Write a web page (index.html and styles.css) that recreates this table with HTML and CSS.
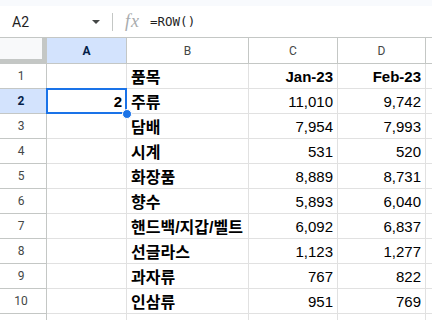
FILE: index.html
```html
<!DOCTYPE html>
<html lang="ko">
<head>
    <meta charset="UTF-8">
    <meta name="viewport" content="width=device-width, initial-scale=1.0">
    <title>Sheet</title>
    <link rel="stylesheet" href="styles.css">
</head>
<body>
    <div class="top-strip"></div>
    <div class="formula-bar">
        <div class="name-box">
            <span class="name">A2</span>
            <span class="caret"></span>
        </div>
        <span class="sep"></span>
        <span class="fx">fx</span>
        <span class="formula">=ROW()</span>
    </div>

    <div class="sheet">
        <div class="corner"></div>
        <div class="col-head active">A</div>
        <div class="col-head">B</div>
        <div class="col-head">C</div>
        <div class="col-head">D</div>
        <div class="col-head"></div>

        <div class="row-head">1</div>
        <div class="cell"></div>
        <div class="cell bold ko">품목</div>
        <div class="cell num bold">Jan-23</div>
        <div class="cell num bold">Feb-23</div>
        <div class="cell"></div>

        <div class="row-head active">2</div>
        <div class="cell num bold selected">2<span class="handle"></span></div>
        <div class="cell bold ko">주류</div>
        <div class="cell num">11,010</div>
        <div class="cell num">9,742</div>
        <div class="cell"></div>

        <div class="row-head">3</div>
        <div class="cell"></div>
        <div class="cell bold ko">담배</div>
        <div class="cell num">7,954</div>
        <div class="cell num">7,993</div>
        <div class="cell"></div>

        <div class="row-head">4</div>
        <div class="cell"></div>
        <div class="cell bold ko">시계</div>
        <div class="cell num">531</div>
        <div class="cell num">520</div>
        <div class="cell"></div>

        <div class="row-head">5</div>
        <div class="cell"></div>
        <div class="cell bold ko">화장품</div>
        <div class="cell num">8,889</div>
        <div class="cell num">8,731</div>
        <div class="cell"></div>

        <div class="row-head">6</div>
        <div class="cell"></div>
        <div class="cell bold ko">향수</div>
        <div class="cell num">5,893</div>
        <div class="cell num">6,040</div>
        <div class="cell"></div>

        <div class="row-head">7</div>
        <div class="cell"></div>
        <div class="cell bold ko">핸드백/지갑/벨트</div>
        <div class="cell num">6,092</div>
        <div class="cell num">6,837</div>
        <div class="cell"></div>

        <div class="row-head">8</div>
        <div class="cell"></div>
        <div class="cell bold ko">선글라스</div>
        <div class="cell num">1,123</div>
        <div class="cell num">1,277</div>
        <div class="cell"></div>

        <div class="row-head">9</div>
        <div class="cell"></div>
        <div class="cell bold ko">과자류</div>
        <div class="cell num">767</div>
        <div class="cell num">822</div>
        <div class="cell"></div>

        <div class="row-head">10</div>
        <div class="cell"></div>
        <div class="cell bold ko">인삼류</div>
        <div class="cell num">951</div>
        <div class="cell num">769</div>
        <div class="cell"></div>

        <div class="row-head">11</div>
        <div class="cell"></div>
        <div class="cell"></div>
        <div class="cell"></div>
        <div class="cell"></div>
        <div class="cell"></div>
    </div>
</body>
</html>
```

FILE: styles.css
```css
body {
    margin: 0;
    width: 432px;
    height: 320px;
    overflow: hidden;
    background: white;
    font-family: "Liberation Sans", Arial, "Noto Sans CJK KR", sans-serif;
}
.top-strip {
    height: 6px;
    background: #f8fafd;
}
.formula-bar {
    height: 31px;
    border-bottom: 1px solid #c4c7c5;
    display: flex;
    align-items: center;
    color: #1f1f1f;
}
.name-box {
    width: 100px;
    display: flex;
    align-items: center;
    justify-content: space-between;
    padding-left: 12px;
    box-sizing: border-box;
}
.name {
    font-family: Roboto, "Liberation Sans", sans-serif;
    font-size: 14px;
}
.caret {
    width: 0;
    height: 0;
    border-left: 4px solid transparent;
    border-right: 4px solid transparent;
    border-top: 4px solid #444746;
    margin-top: 1px;
}
.sep {
    width: 1px;
    height: 18px;
    background: #c4c7c5;
    margin-left: 12px;
}
.fx {
    font-family: "Liberation Serif", serif;
    font-style: italic;
    font-size: 18px;
    color: #a8abad;
    margin-left: 12px;
    letter-spacing: 1px;
}
.formula {
    font-family: "DejaVu Sans Mono", monospace;
    font-size: 12.5px;
    margin-left: 10px;
}
.sheet {
    display: grid;
    grid-template-columns: 47px 80px 122px 89px 88px 1fr;
    grid-auto-rows: 25px;
    grid-template-rows: 26px;
}
.sheet > div {
    box-sizing: border-box;
    border-right: 1px solid #e1e1e1;
    border-bottom: 1px solid #e1e1e1;
    display: flex;
    align-items: center;
    white-space: nowrap;
}
.sheet > .corner {
    background: #f8f9fa;
    border-right: 5px solid #c4c7c5;
    border-bottom: 5px solid #c4c7c5;
}
.sheet > .col-head {
    justify-content: center;
    font-family: Roboto, "Liberation Sans", sans-serif;
    font-size: 12px;
    color: #444746;
    border-right-color: #c4c7c5;
    border-bottom-color: #c4c7c5;
}
.sheet > .row-head {
    justify-content: center;
    padding-right: 4px;
    font-family: Roboto, "Liberation Sans", sans-serif;
    font-size: 12px;
    color: #444746;
    border-right-color: #c4c7c5;
    border-bottom-color: #c4c7c5;
}
.sheet > .active {
    background: #d3e3fd;
    color: #041e49;
    font-weight: bold;
}
.cell {
    font-size: 15px;
    color: #000;
    padding: 0 4px;
}
.cell.bold {
    font-weight: bold;
    font-family: "Liberation Sans", "Noto Sans CJK KR", sans-serif;
}
.cell.ko {
    font-size: 16px;
}
.cell.num {
    justify-content: flex-end;
}
.sheet > .selected {
    position: relative;
}
.selected::after {
    content: "";
    position: absolute;
    left: -1px;
    top: -1px;
    right: -1px;
    bottom: -1px;
    border: 2px solid #1a73e8;
}
.handle {
    position: absolute;
    right: -6px;
    bottom: -6px;
    width: 8px;
    height: 8px;
    border-radius: 50%;
    background: #1a73e8;
    border: 1px solid white;
    z-index: 2;
}
```
